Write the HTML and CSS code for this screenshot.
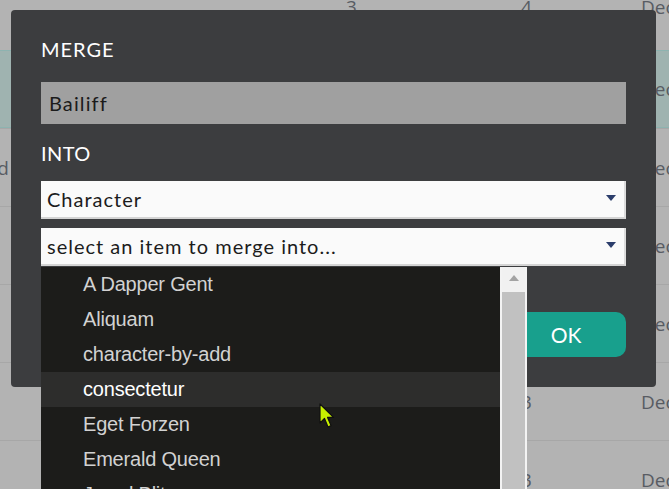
FILE: index.html
```html
<!DOCTYPE html>
<html>
    <head>
        <title>Merge</title>
        <link rel="stylesheet" href="styles.css">
    </head>
    <body>
        <div class="grid">
            <div class="row head">
                <div class="c-name"></div>
                <div class="c-a">3</div>
                <div class="c-b">4</div>
                <div class="c-date">Dec</div>
            </div>
            <div class="row selected">
                <div class="c-name"></div>
                <div class="c-a"></div>
                <div class="c-b"></div>
                <div class="c-date">Dec</div>
            </div>
            <div class="row">
                <div class="c-name"><span>Kid</span></div>
                <div class="c-a"></div>
                <div class="c-b"></div>
                <div class="c-date">Dec</div>
            </div>
            <div class="row">
                <div class="c-name"></div>
                <div class="c-a"></div>
                <div class="c-b"></div>
                <div class="c-date">Dec</div>
            </div>
            <div class="row">
                <div class="c-name"></div>
                <div class="c-a"></div>
                <div class="c-b"></div>
                <div class="c-date">Dec</div>
            </div>
            <div class="row">
                <div class="c-name"></div>
                <div class="c-a"></div>
                <div class="c-b">3</div>
                <div class="c-date">Dec</div>
            </div>
            <div class="row">
                <div class="c-name"></div>
                <div class="c-a"></div>
                <div class="c-b">3</div>
                <div class="c-date">Dec</div>
            </div>
        </div>

        <div class="dialog">
            <h2>MERGE</h2>
            <div class="readonly">Bailiff</div>
            <h3>INTO</h3>
            <div class="select">
                <span>Character</span>
                <i class="caret"></i>
            </div>
            <div class="select second">
                <span>select an item to merge into...</span>
                <i class="caret"></i>
            </div>
            <div class="actions">
                <button type="button">OK</button>
            </div>
        </div>

        <div class="dropdown">
            <ul class="options">
                <li>A Dapper Gent</li>
                <li>Aliquam</li>
                <li>character-by-add</li>
                <li class="hover">consectetur</li>
                <li>Eget Forzen</li>
                <li>Emerald Queen</li>
                <li>Jewel Blitz</li>
            </ul>
            <div class="scrollbar">
                <div class="up"><i></i></div>
                <div class="thumb"></div>
            </div>
        </div>

        <svg class="pointer" width="16" height="26" viewBox="0 0 16 26">
            <path d="M1 1 L1 20 L5.5 15.5 L9 24 L12 22.6 L8.6 14.4 L14.5 14.4 Z" fill="#c8f000" stroke="#111" stroke-width="1.2" stroke-linejoin="round"/>
        </svg>
    </body>
</html>
```

FILE: styles.css
```css
body {
    margin: 0;
    width: 669px;
    height: 489px;
    overflow: hidden;
    position: relative;
    background: #b3b3b3;
    font-family: 'Open Sans', sans-serif;
    color: #585c63;
}

.grid {
    display: flex;
    flex-direction: column;
}

.row {
    display: flex;
    align-items: center;
    height: 78px;
    border-top: 1px solid #a7a7a7;
    box-sizing: border-box;
    font-size: 19px;
}

.row > div {
    flex-shrink: 0;
}

.row.head {
    height: 50px;
    border-top: 0;
    align-items: flex-start;
}

.row.head > div {
    margin-top: -6px;
}

.row.selected {
    background: #9fb3b0;
    border-top: 1px solid #8db3b0;
    border-bottom: 1px solid #8db3b0;
}

.c-name {
    width: 9px;
    display: flex;
    justify-content: flex-end;
    overflow: hidden;
    white-space: nowrap;
}

.c-a {
    width: 175px;
    margin-left: 337px;
}

.c-b {
    width: 120px;
}

.c-date {
    white-space: nowrap;
}

.dialog {
    position: absolute;
    left: 11px;
    top: 10px;
    width: 645px;
    height: 377px;
    box-sizing: border-box;
    padding: 27px 30px 30px;
    background: #3c3d3f;
    border-radius: 4px;
    font-family: Lato, sans-serif;
}

h2,
h3 {
    margin: 0;
    font-size: 20px;
    font-weight: normal;
    line-height: 24px;
    color: #ffffff;
    letter-spacing: 1px;
}

h3 {
    margin-top: 17px;
    letter-spacing: 0.4px;
}

.readonly {
    margin-top: 21px;
    height: 42px;
    padding-left: 8px;
    line-height: 42px;
    background: #a0a0a0;
    color: #1b1b1b;
    font-size: 20px;
    letter-spacing: 1.1px;
}

.select {
    display: flex;
    align-items: center;
    justify-content: space-between;
    margin-top: 16px;
    height: 38px;
    padding: 0 8px 0 6px;
    box-sizing: border-box;
    background: #fafafa;
    border-bottom: 2px solid #d4d4d4;
    border-right: 2px solid #dcdcdc;
    color: #1c1c1c;
    font-size: 20px;
    letter-spacing: 1px;
}

.select.second {
    margin-top: 9px;
}

.caret {
    width: 0;
    height: 0;
    border-left: 5.5px solid transparent;
    border-right: 5.5px solid transparent;
    border-top: 6px solid #2b3d6b;
    margin-top: -2px;
}

.actions {
    display: flex;
    justify-content: flex-end;
    margin-top: 46px;
}

button {
    width: 120px;
    height: 45px;
    border: 0;
    border-radius: 10px;
    background: #18a08d;
    color: #ffffff;
    font-family: Lato, sans-serif;
    font-size: 21px;
}

.dropdown {
    position: absolute;
    left: 41px;
    top: 267px;
    width: 486px;
    height: 222px;
    display: flex;
}

.options {
    flex: 1;
    margin: 0;
    padding: 0;
    list-style: none;
    background: #1c1c1a;
    font-family: 'Liberation Sans', Arial, sans-serif;
    font-size: 20px;
    color: #d2d2d2;
}

.options li {
    height: 35px;
    line-height: 35px;
    padding-left: 42px;
    letter-spacing: -0.2px;
}

.options li.hover {
    background: #2d2d2c;
    color: #ffffff;
}

.scrollbar {
    width: 27px;
    box-sizing: border-box;
    border-left: 2px solid #f3f3f3;
    border-right: 2px solid #f3f3f3;
    background: #f1f1f1;
    display: flex;
    flex-direction: column;
}

.scrollbar .up {
    height: 25px;
    display: flex;
    justify-content: center;
    align-items: center;
}

.scrollbar .up i {
    width: 0;
    height: 0;
    border-left: 5px solid transparent;
    border-right: 5px solid transparent;
    border-bottom: 6px solid #a3a3a3;
    margin-top: -4px;
}

.scrollbar .thumb {
    flex: 1;
    background: #c1c1c1;
}

.pointer {
    position: absolute;
    left: 319px;
    top: 403px;
}
```
